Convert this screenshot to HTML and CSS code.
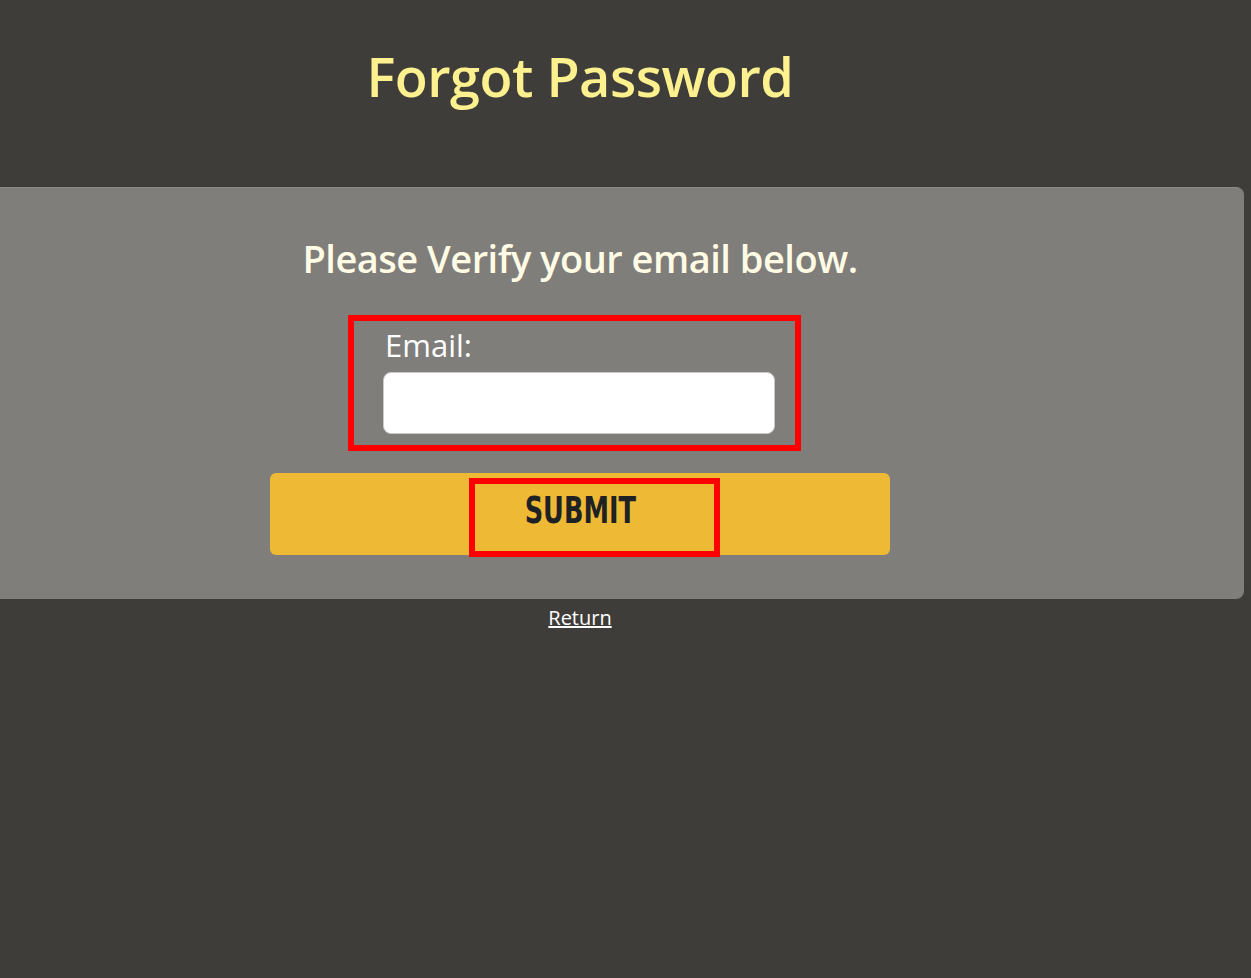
FILE: index.html
```html
<!DOCTYPE html>
<html>
<head>
<meta charset="utf-8">
<title>Forgot Password</title>
<link rel="stylesheet" href="styles.css">
</head>
<body>
<div class="page">
  <h1 class="title">Forgot Password</h1>
  <form class="panel">
    <h2 class="subtitle">Please Verify your email below.</h2>
    <div class="field">
      <label class="label" for="email">Email:</label>
      <input class="input" id="email" type="email">
    </div>
    <button class="submit" type="button"><span class="submit-text">SUBMIT</span><span class="mark"></span></button>
  </form>
  <a class="return" href="#">Return</a>
</div>
</body>
</html>
```
FILE: styles.css
```css
html, body {
  margin: 0;
  padding: 0;
  background: #3f3d39;
}
body {
  font-family: "Open Sans", "Noto Sans", sans-serif;
  height: 978px;
  overflow: hidden;
}
.page {
  width: 1160px;
  display: flex;
  flex-direction: column;
  align-items: center;
}
.title {
  margin: 0;
  padding-top: 36px;
  height: 187px;
  box-sizing: border-box;
  font-size: 54px;
  line-height: 80px;
  font-weight: 600;
  color: #fdf08e;
  letter-spacing: -0.5px;
}
.panel {
  align-self: flex-start;
  width: 1244px;
  height: 412px;
  box-sizing: border-box;
  padding-right: 84px;
  background: #7f7e7b;
  border-top: 1px solid #8a8986;
  border-radius: 0 8px 8px 0;
  display: flex;
  flex-direction: column;
  align-items: center;
}
.subtitle {
  margin: 0;
  padding-top: 42px;
  height: 127px;
  box-sizing: border-box;
  font-size: 38px;
  line-height: 56px;
  font-weight: 600;
  color: #fffbe4;
  letter-spacing: -0.5px;
}
.field {
  margin-right: 11px;
  width: 453px;
  height: 136px;
  box-sizing: border-box;
  border: 6px solid #ff0000;
  padding: 4px 19px 0 30px;
  display: flex;
  flex-direction: column;
  align-items: flex-start;
}
.label {
  font-size: 31px;
  line-height: 40px;
  color: #ffffff;
  margin-left: 1px;
}
.input {
  margin-top: 7px;
  width: 392px;
  height: 62px;
  box-sizing: border-box;
  border: 1px solid #c9c9c9;
  border-radius: 8px;
  background: #ffffff;
  margin-left: -1px;
}
.submit {
  position: relative;
  margin-top: 22px;
  width: 620px;
  height: 82px;
  border: none;
  border-radius: 6px;
  background: #eeb935;
  padding: 0;
  display: flex;
  align-items: center;
  justify-content: center;
}
.submit-text {
  font-family: "DejaVu Sans Condensed", "DejaVu Sans", sans-serif;
  font-weight: 700;
  font-size: 37px;
  line-height: 40px;
  color: #1f2224;
  display: inline-block;
  transform: scaleX(0.77);
  margin-top: -6px;
}
.mark {
  position: absolute;
  left: 199px;
  top: 5px;
  width: 251px;
  height: 79px;
  box-sizing: border-box;
  border: 6px solid #ff0000;
}
.return {
  margin-top: 5px;
  font-size: 20px;
  line-height: 28px;
  color: #ffffff;
}
```
